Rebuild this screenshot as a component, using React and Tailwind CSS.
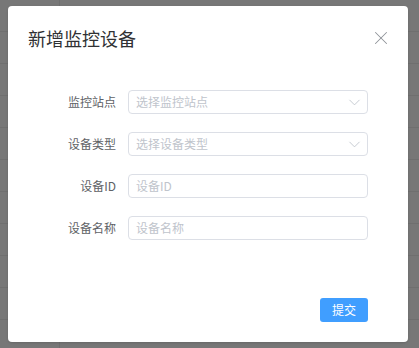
import { ChevronDown, X } from "lucide-react";

const fields = [
  { label: "监控站点", placeholder: "选择监控站点", select: true },
  { label: "设备类型", placeholder: "选择设备类型", select: true },
  { label: "设备ID", placeholder: "设备ID" },
  { label: "设备名称", placeholder: "设备名称" },
];

export default function App() {
  const rows = Array.from({ length: 11 });

  return (
    <div
      className="relative h-[348px] w-full overflow-hidden bg-[#777777]"
      style={{ fontFamily: '"Noto Sans CJK SC", "Noto Sans", sans-serif' }}
    >
      {/* 背景表格 (遮罩下) */}
      <div className="flex flex-col">
        {rows.map((_, i) => (
          <div key={i} className="flex h-[32px] border-b border-[#6f6f6f]">
            <div className="w-[60px] border-r border-[#6f6f6f]" />
          </div>
        ))}
      </div>

      {/* 对话框 */}
      <div className="absolute left-[8px] top-[6px] flex h-[336px] w-[400px] flex-col rounded-sm bg-white shadow">
        <div className="flex items-center justify-between px-5 pt-5">
          <h2 className="text-[18px] leading-6 text-[#303133]">新增监控设备</h2>
          <button className="-mr-1 text-[#909399]">
            <X size={22} strokeWidth={1.1} />
          </button>
        </div>

        <div className="mt-[40px] flex flex-col gap-[18px] px-5">
          {fields.map((f, i) => (
            <div key={i} className="flex items-center">
              <label className="w-[100px] pr-3 text-right text-[12px] text-[#606266]">{f.label}</label>
              <div className="flex h-[24px] w-[240px] items-center justify-between rounded-[4px] border border-[#dcdfe6] pl-[7px] pr-[3px]">
                <span className="text-[12px] text-[#c0c4cc]">{f.placeholder}</span>
                {f.select && <ChevronDown size={19} strokeWidth={1.1} className="text-[#c0c4cc]" />}
              </div>
            </div>
          ))}
        </div>

        <div className="mt-auto flex justify-end px-10 pb-[20px]">
          <button className="h-[24px] w-[48px] rounded-[3px] bg-[#409eff] text-[12px] text-white">提交</button>
        </div>
      </div>
    </div>
  );
}
